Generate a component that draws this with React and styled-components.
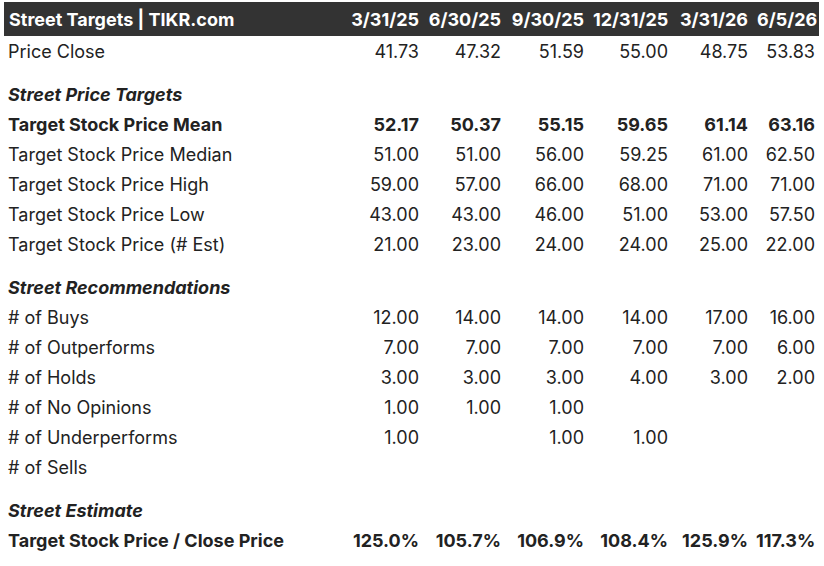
import React from 'react';
import styled, { createGlobalStyle } from 'styled-components';

const GlobalStyle = createGlobalStyle`
  html, body {
    margin: 0;
    padding: 0;
    background: #ffffff;
  }
  body {
    font-family: Inter, "Noto Sans", "Liberation Sans", sans-serif;
    color: #222222;
  }
`;

const Page = styled.div`
  padding: 2px 5px 0 4px;
`;

const Table = styled.table`
  width: 815px;
  table-layout: fixed;
  border-collapse: collapse;
  font-size: 18px;
`;

const HeadRow = styled.tr`
  background: #333333;
  color: #ffffff;
  height: 34px;
`;

const HeadCell = styled.th`
  font-weight: 700;
  text-align: ${(p) => (p.$left ? 'left' : 'right')};
  padding: 0 4px 0 5px;
  white-space: nowrap;
`;

const Row = styled.tr`
  height: 30px;
`;

const Cell = styled.td`
  padding: ${(p) => (p.$section ? '13px 4px 0 4px' : '0 4px')};
  height: 30px;
  text-align: ${(p) => (p.$left ? 'left' : 'right')};
  font-weight: ${(p) => (p.$bold ? 700 : 400)};
  font-style: ${(p) => (p.$italic ? 'italic' : 'normal')};
  white-space: nowrap;
  vertical-align: middle;
  box-sizing: content-box;
`;

const cols = ['3/31/25', '6/30/25', '9/30/25', '12/31/25', '3/31/26', '6/5/26'];
const widths = [337, 82, 82, 83, 84, 80, 67];

const rows = [
  { label: 'Price Close', values: ['41.73', '47.32', '51.59', '55.00', '48.75', '53.83'] },
  { section: 'Street Price Targets' },
  { label: 'Target Stock Price Mean', bold: true, values: ['52.17', '50.37', '55.15', '59.65', '61.14', '63.16'] },
  { label: 'Target Stock Price Median', values: ['51.00', '51.00', '56.00', '59.25', '61.00', '62.50'] },
  { label: 'Target Stock Price High', values: ['59.00', '57.00', '66.00', '68.00', '71.00', '71.00'] },
  { label: 'Target Stock Price Low', values: ['43.00', '43.00', '46.00', '51.00', '53.00', '57.50'] },
  { label: 'Target Stock Price (# Est)', values: ['21.00', '23.00', '24.00', '24.00', '25.00', '22.00'] },
  { section: 'Street Recommendations' },
  { label: '# of Buys', values: ['12.00', '14.00', '14.00', '14.00', '17.00', '16.00'] },
  { label: '# of Outperforms', values: ['7.00', '7.00', '7.00', '7.00', '7.00', '6.00'] },
  { label: '# of Holds', values: ['3.00', '3.00', '3.00', '4.00', '3.00', '2.00'] },
  { label: '# of No Opinions', values: ['1.00', '1.00', '1.00', '', '', ''] },
  { label: '# of Underperforms', values: ['1.00', '', '1.00', '1.00', '', ''] },
  { label: '# of Sells', values: ['', '', '', '', '', ''] },
  { section: 'Street Estimate' },
  { label: 'Target Stock Price / Close Price', bold: true, values: ['125.0%', '105.7%', '106.9%', '108.4%', '125.9%', '117.3%'] },
];

export default function App() {
  return (
    <>
      <GlobalStyle />
      <Page>
        <Table>
          <colgroup>
            {widths.map((w, i) => (
              <col key={i} style={{ width: w }} />
            ))}
          </colgroup>
          <thead>
            <HeadRow>
              <HeadCell $left>Street Targets | TIKR.com</HeadCell>
              {cols.map((c) => (
                <HeadCell key={c}>{c}</HeadCell>
              ))}
            </HeadRow>
          </thead>
          <tbody>
            {rows.map((r, i) =>
              r.section ? (
                <Row key={i}>
                  <Cell $left $section $bold $italic colSpan={7}>
                    {r.section}
                  </Cell>
                </Row>
              ) : (
                <Row key={i}>
                  <Cell $left $bold={r.bold}>{r.label}</Cell>
                  {r.values.map((v, j) => (
                    <Cell key={j} $bold={r.bold}>{v}</Cell>
                  ))}
                </Row>
              )
            )}
          </tbody>
        </Table>
      </Page>
    </>
  );
}
